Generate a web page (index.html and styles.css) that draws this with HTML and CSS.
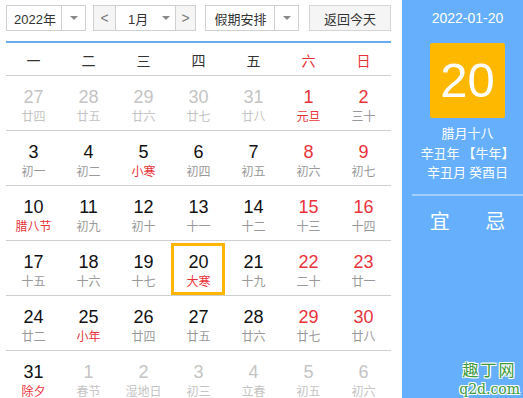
FILE: index.html
```html
<!DOCTYPE html>
<html lang="zh">
<head>
<meta charset="utf-8">
<link rel="stylesheet" href="styles.css">
</head>
<body>
<div class="wrap">
  <div class="cal">
    <div class="toolbar">
      <div class="select year"><span class="val">2022年</span><span class="caret"><i></i></span></div>
      <div class="month-group">
        <span class="nav">&lt;</span>
        <span class="month"><span class="val">1月</span><i></i></span>
        <span class="nav">&gt;</span>
      </div>
      <div class="select holiday"><span class="val">假期安排</span><span class="caret"><i></i></span></div>
      <div class="btn">返回今天</div>
    </div>
    <div class="week">
      <span>一</span><span>二</span><span>三</span><span>四</span><span>五</span><span class="red">六</span><span class="red">日</span>
    </div>
    <div class="grid">
      <div class="row">
        <div class="cell other"><b>27</b><s>廿四</s></div>
        <div class="cell other"><b>28</b><s>廿五</s></div>
        <div class="cell other"><b>29</b><s>廿六</s></div>
        <div class="cell other"><b>30</b><s>廿七</s></div>
        <div class="cell other"><b>31</b><s>廿八</s></div>
        <div class="cell"><b class="red">1</b><s class="red">元旦</s></div>
        <div class="cell"><b class="red">2</b><s>三十</s></div>
      </div>
      <div class="row">
        <div class="cell"><b>3</b><s>初一</s></div>
        <div class="cell"><b>4</b><s>初二</s></div>
        <div class="cell"><b>5</b><s class="red">小寒</s></div>
        <div class="cell"><b>6</b><s>初四</s></div>
        <div class="cell"><b>7</b><s>初五</s></div>
        <div class="cell"><b class="red">8</b><s>初六</s></div>
        <div class="cell"><b class="red">9</b><s>初七</s></div>
      </div>
      <div class="row">
        <div class="cell"><b>10</b><s class="red">腊八节</s></div>
        <div class="cell"><b>11</b><s>初九</s></div>
        <div class="cell"><b>12</b><s>初十</s></div>
        <div class="cell"><b>13</b><s>十一</s></div>
        <div class="cell"><b>14</b><s>十二</s></div>
        <div class="cell"><b class="red">15</b><s>十三</s></div>
        <div class="cell"><b class="red">16</b><s>十四</s></div>
      </div>
      <div class="row">
        <div class="cell"><b>17</b><s>十五</s></div>
        <div class="cell"><b>18</b><s>十六</s></div>
        <div class="cell"><b>19</b><s>十七</s></div>
        <div class="cell today"><b>20</b><s class="red">大寒</s></div>
        <div class="cell"><b>21</b><s>十九</s></div>
        <div class="cell"><b class="red">22</b><s>二十</s></div>
        <div class="cell"><b class="red">23</b><s>廿一</s></div>
      </div>
      <div class="row">
        <div class="cell"><b>24</b><s>廿二</s></div>
        <div class="cell"><b>25</b><s class="red">小年</s></div>
        <div class="cell"><b>26</b><s>廿四</s></div>
        <div class="cell"><b>27</b><s>廿五</s></div>
        <div class="cell"><b>28</b><s>廿六</s></div>
        <div class="cell"><b class="red">29</b><s>廿七</s></div>
        <div class="cell"><b class="red">30</b><s>廿八</s></div>
      </div>
      <div class="row">
        <div class="cell"><b>31</b><s class="red">除夕</s></div>
        <div class="cell other"><b>1</b><s>春节</s></div>
        <div class="cell other"><b>2</b><s>湿地日</s></div>
        <div class="cell other"><b>3</b><s>初三</s></div>
        <div class="cell other"><b>4</b><s>立春</s></div>
        <div class="cell other"><b>5</b><s>初五</s></div>
        <div class="cell other"><b>6</b><s>初六</s></div>
      </div>
    </div>
  </div>
  <div class="side">
    <div class="date">2022-01-20</div>
    <div class="day-box">20</div>
    <div class="lunar">
      <p>腊月十八</p>
      <p>辛丑年 【牛年】</p>
      <p>辛丑月 癸酉日</p>
    </div>
    <div class="yiji"><span>宜</span><span>忌</span></div>
  </div>
</div>
<div class="watermark"><div class="wm1">趣丁网</div><div class="wm2">q2d.com</div></div>
</body>
</html>
```
FILE: styles.css
```css
* { box-sizing: border-box; margin: 0; padding: 0; }
html, body { width: 523px; height: 398px; overflow: hidden; background: #fff; }
body {
  font-family: "Liberation Sans", Arial, "Noto Sans CJK SC", sans-serif;
  color: #333;
  position: relative;
}
.wrap { display: flex; height: 398px; }
.cal { width: 402px; padding: 5px 11px 0 6px; }
.toolbar { display: flex; height: 26px; font-size: 13px; }
.select {
  display: flex; border: 1px solid #d0d0d0; background: #fff; height: 26px;
}
.select .val { flex: 1; display: flex; align-items: center; justify-content: center; }
.select .caret {
  width: 24px; border-left: 1px solid #d0d0d0; display: flex; align-items: center; justify-content: center;
}
i {
  display: block; width: 0; height: 0;
  border-left: 4px solid transparent; border-right: 4px solid transparent; border-top: 4px solid #888;
}
.year { width: 80px; }
.year .val { padding-left: 2px; }
.month-group {
  margin-left: 7px; width: 103px; display: flex; border: 1px solid #d0d0d0; height: 26px;
}
.nav {
  width: 22px; background: #f5f5f5; display: flex; align-items: center; justify-content: center;
  color: #777; font-size: 14px;
}
.nav:first-child { border-right: 1px solid #d0d0d0; }
.nav:last-child { border-left: 1px solid #d0d0d0; width: 20px; }
.month { flex: 1; display: flex; align-items: center; padding-left: 12px; }
.month .val { width: 34px; }
.holiday { margin-left: 9px; width: 94px; }
.holiday .val { padding-left: 1px; }
.btn {
  margin-left: 10px; width: 82px; border: 1px solid #d6d6d6; background: #f5f5f5;
  display: flex; align-items: center; justify-content: center;
}
.week {
  margin-top: 10px; border-top: 2px solid #6aaaf0; border-bottom: 1px solid #cfcfcf;
  height: 35px; display: grid; grid-template-columns: repeat(7, 55px);
  font-size: 14px; align-items: center; justify-items: center; padding-top: 1px;
  font-family: "Noto Sans CJK SC", sans-serif; color: #333;
}
.red { color: #e8333b; }
.grid { display: flex; flex-direction: column; }
.row { display: grid; grid-template-columns: repeat(7, 55px); height: 55px; border-bottom: 1px solid #cfcfcf; }
.cell {
  position: relative; display: flex; flex-direction: column; align-items: center; padding-top: 10px;
}
.cell b { font-weight: normal; font-size: 18px; line-height: 22px; color: #111; }
.cell s { text-decoration: none; font-size: 12px; line-height: 14px; margin-top: 1px; color: #999;
  font-family: "Noto Sans CJK SC", sans-serif; }
.cell b.red, .cell s.red { color: #e8333b; }
.cell.other b, .cell.other s { color: #c4c4c4; }
.today::after {
  content: ""; position: absolute; left: 0; right: 1px; top: 2px; bottom: 0;
  border: 3px solid #ffb600;
}
.side {
  flex: 1; background: #65affc; color: #fff; padding: 10px 0 0 10px;
  display: flex; flex-direction: column; align-items: center;
}
.date { font-size: 14px; line-height: 16px; }
.day-box {
  margin-top: 17px; width: 75px; height: 75px; background: #ffb800; border-radius: 2px;
  display: flex; align-items: center; justify-content: center; font-size: 49px; line-height: 1;
}
.lunar { margin-top: 5px; text-align: center; font-size: 13px; line-height: 19.5px;
  font-family: "Noto Sans CJK SC", sans-serif; }
.yiji {
  margin-top: 12px; width: 100%; border-top: 2px solid #a3cffd; display: flex;
  font-size: 20px; padding-top: 13px; font-family: "Noto Sans CJK SC", sans-serif;
}
.yiji span { flex: 1; text-align: center; line-height: 24px; }
.watermark {
  position: absolute; right: 3px; bottom: 2px; text-align: center; color: #3d9b3d;
  text-shadow: -1px -1px 0 #fff, 1px -1px 0 #fff, -1px 1px 0 #fff, 1px 1px 0 #fff, 0 0 2px #fff;
}
.wm1 { font-size: 16px; line-height: 17px; letter-spacing: 2px; font-family: "Noto Sans CJK SC", sans-serif; }
.wm2 { margin-top: 4px; font-size: 14px; line-height: 14px; font-family: "DejaVu Serif", serif; }
```
